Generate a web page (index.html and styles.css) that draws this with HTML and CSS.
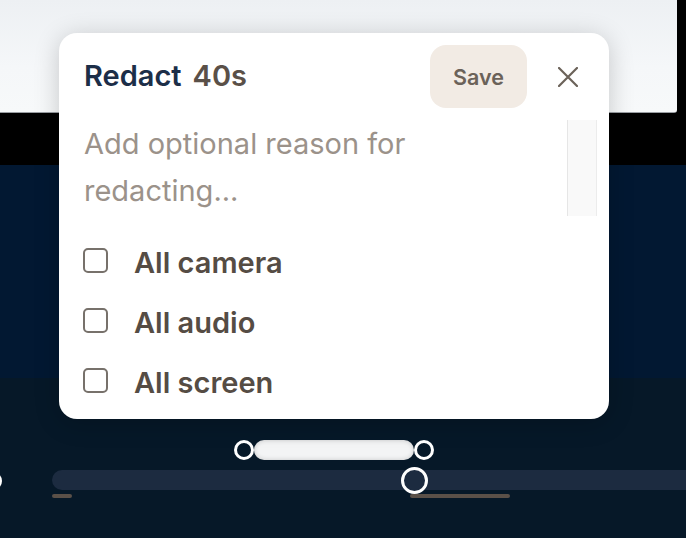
FILE: index.html
```html
<!DOCTYPE html>
<html lang="en">
<head>
<meta charset="utf-8">
<title>Redact</title>
<link rel="stylesheet" href="styles.css">
</head>
<body>
<div class="app">
  <div class="stage">
    <div class="preview"></div>
  </div>
  <div class="workspace"></div>
  <div class="timeline">
    <div class="edge-handle"></div>
    <div class="track"></div>
    <div class="mark mark-start"></div>
    <div class="mark mark-range"></div>
    <div class="range"></div>
    <div class="handle handle-left"></div>
    <div class="handle handle-right"></div>
    <div class="playhead"></div>
  </div>

  <div class="popover">
    <div class="header">
      <div class="title"><span class="title-main">Redact</span><span class="title-time">40s</span></div>
      <button class="save">Save</button>
      <button class="close" aria-label="Close">
        <svg width="20" height="20" viewBox="0 0 20 20"><path d="M1 1 L19 19 M19 1 L1 19" stroke="#6b6259" stroke-width="2.2" stroke-linecap="round" fill="none"/></svg>
      </button>
    </div>
    <div class="reason">
      <div class="placeholder">Add optional reason for redacting...</div>
      <div class="scroll-track"></div>
    </div>
    <ul class="options">
      <li class="option"><span class="box"></span><span class="label">All camera</span></li>
      <li class="option"><span class="box"></span><span class="label">All audio</span></li>
      <li class="option"><span class="box"></span><span class="label">All screen</span></li>
    </ul>
  </div>
</div>
</body>
</html>
```

FILE: styles.css
```css
* { box-sizing: border-box; }
html, body { margin: 0; padding: 0; }
body {
  width: 686px;
  height: 538px;
  overflow: hidden;
  background: #061828;
  font-family: Inter, "Noto Sans", "Liberation Sans", sans-serif;
}
.app {
  position: relative;
  width: 686px;
  height: 538px;
  display: flex;
  flex-direction: column;
}
.stage {
  height: 165px;
  background: #000;
  flex: none;
}
.preview {
  width: 677px;
  height: 113px;
  background: linear-gradient(180deg, #edf0f3 0%, #f5f7f9 60%, #f7f9fa 100%);
  border-bottom: 1px solid #9a9ea3;
  border-bottom-right-radius: 3px;
}
.workspace {
  height: 213px;
  background: #021832;
  flex: none;
}
.timeline {
  position: relative;
  flex: 1;
  background: #061828;
  overflow: hidden;
}
.track {
  position: absolute;
  left: 52px;
  top: 92px;
  width: 660px;
  height: 20px;
  border-radius: 10px;
  background: #1c2b40;
}
.mark {
  position: absolute;
  top: 116px;
  height: 4px;
  border-radius: 2px;
  background: #5a5048;
}
.mark-start { left: 52px; width: 20px; }
.mark-range { left: 410px; width: 100px; }
.range {
  position: absolute;
  left: 254px;
  top: 62px;
  width: 160px;
  height: 20px;
  border-radius: 10px;
  background: #f3f4f5;
  box-shadow: inset 0 0 5px rgba(0, 0, 0, 0.18);
}
.handle {
  position: absolute;
  top: 62px;
  width: 20px;
  height: 20px;
  border-radius: 50%;
  border: 3px solid #fff;
  background: #061828;
}
.handle-left { left: 234px; }
.handle-right { left: 414px; }
.playhead {
  position: absolute;
  left: 401px;
  top: 89px;
  width: 27px;
  height: 27px;
  border-radius: 50%;
  border: 3px solid #fff;
  background: #1c2b40;
}
.edge-handle {
  position: absolute;
  left: -16px;
  top: 94px;
  width: 18px;
  height: 18px;
  border-radius: 50%;
  border: 3px solid #fff;
}

.popover {
  position: absolute;
  left: 59px;
  top: 33px;
  width: 550px;
  height: 386px;
  background: #fff;
  border-radius: 18px;
  box-shadow: 0 4px 26px rgba(0, 0, 0, 0.2);
  padding: 12px 12px 0 25px;
  display: flex;
  flex-direction: column;
}
.header {
  display: flex;
  align-items: center;
  height: 63px;
}
.title {
  flex: 1;
  display: flex;
  align-items: baseline;
  gap: 11px;
  font-size: 29px;
  font-weight: 600;
  padding-bottom: 2px;
}
.title-main { color: #1c2e48; }
.title-time { color: #5a5048; }
.save {
  width: 97px;
  height: 63px;
  border: none;
  border-radius: 16px;
  background: #f2ebe4;
  color: #6b6259;
  font-family: inherit;
  font-size: 21.5px;
  font-weight: 600;
  padding: 0;
}
.close {
  width: 40px;
  height: 40px;
  margin-left: 21px;
  margin-right: 9px;
  border: none;
  background: none;
  padding: 0;
  display: flex;
  align-items: center;
  justify-content: center;
}
.reason {
  margin-top: 12px;
  height: 96px;
  display: flex;
}
.placeholder {
  flex: 1;
  font-size: 29px;
  line-height: 47px;
  color: #9b928a;
  padding-right: 60px;
}
.scroll-track {
  width: 30px;
  height: 96px;
  background: #f9f9f9;
  border-left: 1px solid #e6e6e6;
  border-right: 1px solid #ececec;
}
.options {
  list-style: none;
  margin: 14px 0 0;
  padding: 0;
}
.option {
  height: 60px;
  display: flex;
  align-items: center;
}
.box {
  width: 25px;
  height: 25px;
  border: 2px solid #77716b;
  border-radius: 5px;
  margin-left: -1px;
  margin-right: 26px;
  flex: none;
}
.label {
  font-size: 29px;
  font-weight: 600;
  color: #554c44;
  padding-top: 4px;
}
```
